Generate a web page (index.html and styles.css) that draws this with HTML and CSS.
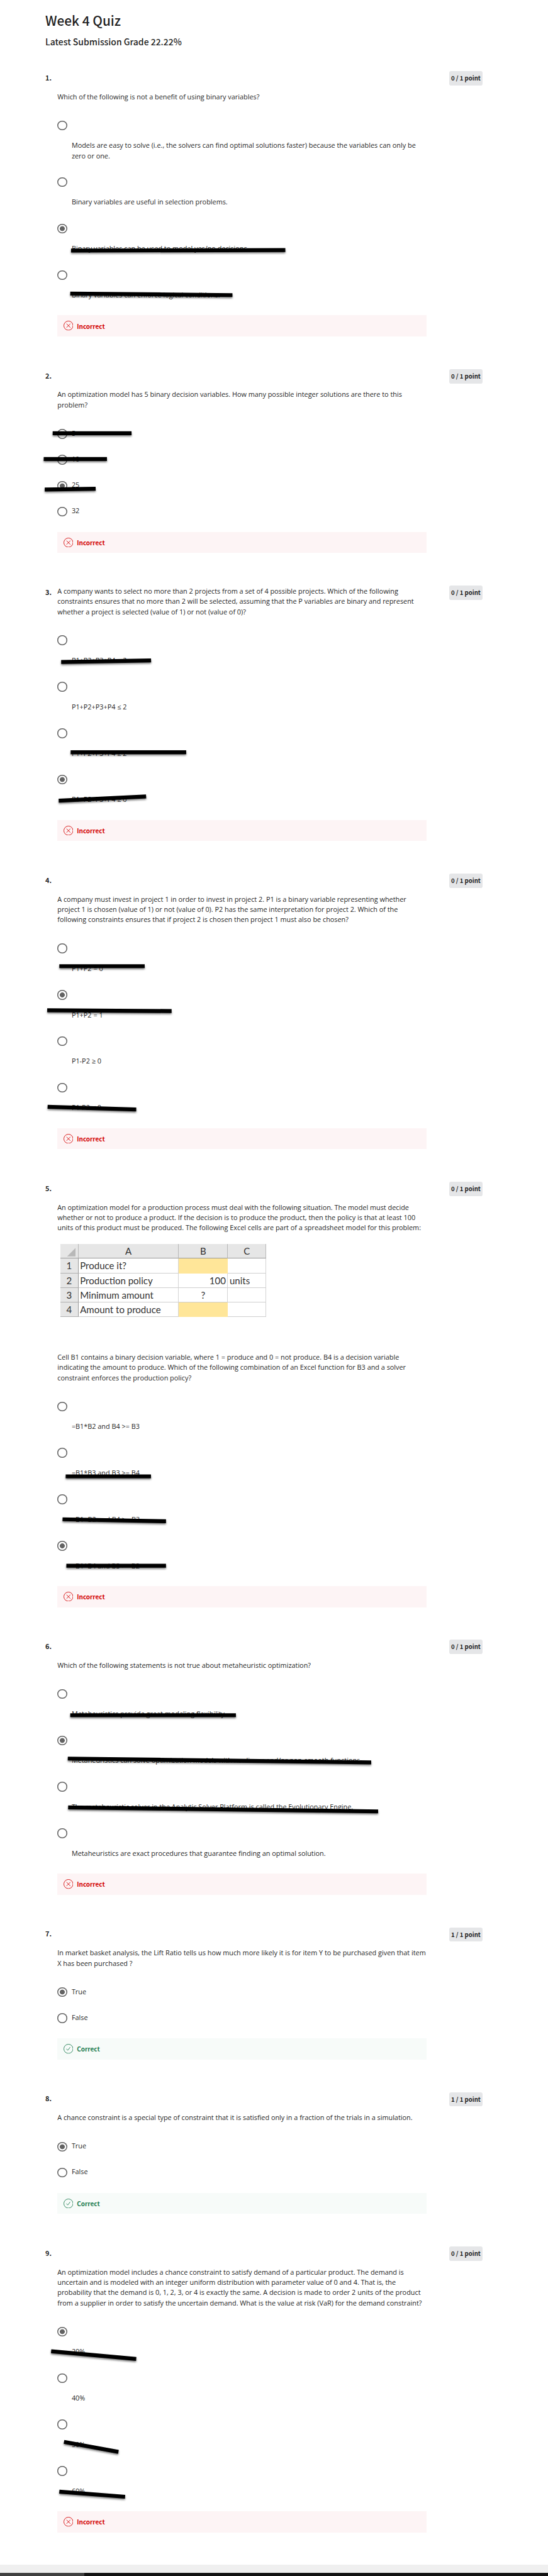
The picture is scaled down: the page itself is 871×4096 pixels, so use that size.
FILE: index.html
```html
<!DOCTYPE html>
<html lang="en">
<head>
<meta charset="utf-8">
<title>Week 4 Quiz</title>
<link rel="stylesheet" href="styles.css">
</head>
<body>
<svg class="symbols" aria-hidden="true">
  <symbol id="cross" viewBox="0 0 25 25"><circle cx="12.5" cy="12.5" r="11.7"/><path d="M7.6 7.6l9.8 9.8M17.4 7.6l-9.8 9.8"/></symbol>
  <symbol id="check" viewBox="0 0 25 25"><circle cx="12.5" cy="12.5" r="11.7"/><path d="M7.2 12.8l3.7 3.4 6-7.8"/></symbol>
</svg>
<main class="page">
  <header class="head">
    <h1 class="title">Week 4 Quiz</h1>
    <h2 class="grade">Latest Submission Grade 22.22%</h2>
  </header>

  <section class="question">
    <div class="num">1.</div>
    <div class="body">
      <p class="prompt">Which of the following is not a benefit of using binary variables?</p>
      <ul class="options">
        <li class="opt"><i class="radio"></i><span class="label">Models are easy to solve (i.e., the solvers can find optimal solutions faster) because the variables can only be<br>zero or one.</span></li>
        <li class="opt"><i class="radio"></i><span class="label">Binary variables are useful in selection problems.</span></li>
        <li class="opt"><i class="radio on"></i><span class="label">Binary variables can be used to model yes/no decisions.</span></li>
        <li class="opt"><i class="radio"></i><span class="label">Binary variables can enforce logical conditions.</span></li>
      </ul>
      <div class="result bad"><svg class="icon"><use href="#cross"/></svg>Incorrect</div>
    </div>
    <div class="points">0 / 1 point</div>
  </section>

  <section class="question">
    <div class="num">2.</div>
    <div class="body">
      <p class="prompt">An optimization model has 5 binary decision variables. How many possible integer solutions are there to this<br>problem?</p>
      <ul class="options inline">
        <li class="opt"><i class="radio"></i><span class="label">5</span></li>
        <li class="opt"><i class="radio"></i><span class="label">10</span></li>
        <li class="opt"><i class="radio on"></i><span class="label">25</span></li>
        <li class="opt"><i class="radio"></i><span class="label">32</span></li>
      </ul>
      <div class="result bad"><svg class="icon"><use href="#cross"/></svg>Incorrect</div>
    </div>
    <div class="points">0 / 1 point</div>
  </section>

  <section class="question">
    <div class="num">3.</div>
    <div class="body flush">
      <p class="prompt">A company wants to select no more than 2 projects from a set of 4 possible projects. Which of the following<br>constraints ensures that no more than 2 will be selected, assuming that the P variables are binary and represent<br>whether a project is selected (value of 1) or not (value of 0)?</p>
      <ul class="options">
        <li class="opt"><i class="radio"></i><span class="label">P1+P2+P3+P4 = 2</span></li>
        <li class="opt"><i class="radio"></i><span class="label">P1+P2+P3+P4 ≤ 2</span></li>
        <li class="opt"><i class="radio"></i><span class="label">P1+P2+P3+P4 ≥ 2</span></li>
        <li class="opt"><i class="radio on"></i><span class="label">P1+P2+P3+P4 ≥ 0</span></li>
      </ul>
      <div class="result bad"><svg class="icon"><use href="#cross"/></svg>Incorrect</div>
    </div>
    <div class="points">0 / 1 point</div>
  </section>

  <section class="question">
    <div class="num">4.</div>
    <div class="body">
      <p class="prompt">A company must invest in project 1 in order to invest in project 2. P1 is a binary variable representing whether<br>project 1 is chosen (value of 1) or not (value of 0). P2 has the same interpretation for project 2. Which of the<br>following constraints ensures that if project 2 is chosen then project 1 must also be chosen?</p>
      <ul class="options">
        <li class="opt"><i class="radio"></i><span class="label">P1+P2 = 0</span></li>
        <li class="opt"><i class="radio on"></i><span class="label">P1+P2 = 1</span></li>
        <li class="opt"><i class="radio"></i><span class="label">P1-P2 ≥ 0</span></li>
        <li class="opt"><i class="radio"></i><span class="label">P1-P2 ≤ 0</span></li>
      </ul>
      <div class="result bad"><svg class="icon"><use href="#cross"/></svg>Incorrect</div>
    </div>
    <div class="points">0 / 1 point</div>
  </section>

  <section class="question">
    <div class="num">5.</div>
    <div class="body">
      <p class="prompt">An optimization model for a production process must deal with the following situation. The model must decide<br>whether or not to produce a product. If the decision is to produce the product, then the policy is that at least 100<br>units of this product must be produced. The following Excel cells are part of a spreadsheet model for this problem:</p>
      <div class="sheet">
        <div class="cell head-cell"><i class="corner"></i></div><div class="cell head-cell">A</div><div class="cell head-cell">B</div><div class="cell head-cell">C</div>
        <div class="cell row-cell">1</div><div class="cell">Produce it?</div><div class="cell fill"></div><div class="cell"></div>
        <div class="cell row-cell">2</div><div class="cell">Production policy</div><div class="cell right">100</div><div class="cell">units</div>
        <div class="cell row-cell">3</div><div class="cell">Minimum amount</div><div class="cell center">?</div><div class="cell"></div>
        <div class="cell row-cell">4</div><div class="cell">Amount to produce</div><div class="cell fill"></div><div class="cell"></div>
      </div>
      <p class="prompt">Cell B1 contains a binary decision variable, where 1 = produce and 0 = not produce. B4 is a decision variable<br>indicating the amount to produce. Which of the following combination of an Excel function for B3 and a solver<br>constraint enforces the production policy?</p>
      <ul class="options">
        <li class="opt"><i class="radio"></i><span class="label">=B1*B2 and B4 &gt;= B3</span></li>
        <li class="opt"><i class="radio"></i><span class="label">=B1*B3 and B3 &gt;= B4</span></li>
        <li class="opt"><i class="radio"></i><span class="label">=B1+B2 and B4 &gt;= B3</span></li>
        <li class="opt"><i class="radio on"></i><span class="label">=B1*B4 and B3 &gt;= B2</span></li>
      </ul>
      <div class="result bad"><svg class="icon"><use href="#cross"/></svg>Incorrect</div>
    </div>
    <div class="points">0 / 1 point</div>
  </section>

  <section class="question">
    <div class="num">6.</div>
    <div class="body">
      <p class="prompt">Which of the following statements is not true about metaheuristic optimization?</p>
      <ul class="options">
        <li class="opt"><i class="radio"></i><span class="label">Metaheuristics provide great modeling flexibility.</span></li>
        <li class="opt"><i class="radio on"></i><span class="label">Metaheuristics can solve optimization models with nonlinear and/or non-smooth functions.</span></li>
        <li class="opt"><i class="radio"></i><span class="label">The metaheuristic solver in the Analytic Solver Platform is called the Evolutionary Engine.</span></li>
        <li class="opt"><i class="radio"></i><span class="label">Metaheuristics are exact procedures that guarantee finding an optimal solution.</span></li>
      </ul>
      <div class="result bad"><svg class="icon"><use href="#cross"/></svg>Incorrect</div>
    </div>
    <div class="points">0 / 1 point</div>
  </section>

  <section class="question">
    <div class="num">7.</div>
    <div class="body">
      <p class="prompt">In market basket analysis, the Lift Ratio tells us how much more likely it is for item Y to be purchased given that item<br>X has been purchased ?</p>
      <ul class="options inline">
        <li class="opt"><i class="radio on"></i><span class="label">True</span></li>
        <li class="opt"><i class="radio"></i><span class="label">False</span></li>
      </ul>
      <div class="result good"><svg class="icon"><use href="#check"/></svg>Correct</div>
    </div>
    <div class="points">1 / 1 point</div>
  </section>

  <section class="question">
    <div class="num">8.</div>
    <div class="body">
      <p class="prompt">A chance constraint is a special type of constraint that it is satisfied only in a fraction of the trials in a simulation.</p>
      <ul class="options inline">
        <li class="opt"><i class="radio on"></i><span class="label">True</span></li>
        <li class="opt"><i class="radio"></i><span class="label">False</span></li>
      </ul>
      <div class="result good"><svg class="icon"><use href="#check"/></svg>Correct</div>
    </div>
    <div class="points">1 / 1 point</div>
  </section>

  <section class="question">
    <div class="num">9.</div>
    <div class="body">
      <p class="prompt">An optimization model includes a chance constraint to satisfy demand of a particular product. The demand is<br>uncertain and is modeled with an integer uniform distribution with parameter value of 0 and 4. That is, the<br>probability that the demand is 0, 1, 2, 3, or 4 is exactly the same. A decision is made to order 2 units of the product<br>from a supplier in order to satisfy the uncertain demand. What is the value at risk (VaR) for the demand constraint?</p>
      <ul class="options">
        <li class="opt"><i class="radio on"></i><span class="label">20%</span></li>
        <li class="opt"><i class="radio"></i><span class="label">40%</span></li>
        <li class="opt"><i class="radio"></i><span class="label">50%</span></li>
        <li class="opt"><i class="radio"></i><span class="label">60%</span></li>
      </ul>
      <div class="result bad"><svg class="icon"><use href="#cross"/></svg>Incorrect</div>
    </div>
    <div class="points">0 / 1 point</div>
  </section>

  <footer class="foot"><div class="track"><div class="thumb"></div></div></footer>

  <!-- marker strokes crossing out the rejected answers -->
  <svg class="strikes" viewBox="0 0 1404 6599" preserveAspectRatio="none">
    <path d="M182 641.7L731 640.6"/><path d="M180 752L595.5 756"/>
    <path d="M135 1110H337"/><path d="M112 1175.9H274"/><path d="M114.6 1254L245 1252"/>
    <path d="M156.7 1696L387 1692"/><path d="M181 1926.9H477"/><path d="M150.4 2051L374.3 2040.3"/>
    <path d="M152 2475H370.7"/><path d="M121 2588L439.6 2590"/><path d="M122 2835.2L349 2842.2"/>
    <path d="M168.3 3782H386.8"/><path d="M160.3 3892L425.3 3897"/><path d="M170 4011H425.3"/>
    <path d="M180 4393.8H604.4"/><path d="M173.7 4505L951 4514.8"/><path d="M174.6 4630L968.8 4640.3"/>
    <path d="M131 6023.3L349 6043"/><path d="M164 6255.4L303.5 6281"/><path d="M152 6383L320.5 6396"/>
  </svg>
</main>
</body>
</html>
```
FILE: styles.css
```css
/* 1rem = 10 design units */
html { font-size: 6.207px; }
* { box-sizing: border-box; }
body { margin: 0; background: #fff; color: #1f1f1f; font-family: "Open Sans", sans-serif; }
.symbols { display: block; width: 0; height: 0; }
.page { position: relative; height: 4096px; overflow: hidden; display: flex; flex-direction: column; }
.head { height: 18.25rem; padding: 3.2rem 0 0 11.6rem; flex: none; }
.title, .grade, .num, .points, .result { font-family: "Noto Sans CJK SC", "Source Sans Pro", sans-serif; font-weight: 700; }
.title { margin: 0; font-size: 3.35rem; line-height: 4rem; font-weight: 500; }
.grade { margin: 2.05rem 0 0; font-size: 2.25rem; line-height: 3rem; font-weight: 500; }

.question { display: flex; align-items: flex-start; padding-left: 11.6rem; margin-bottom: 8.34rem; flex: none; }
.num { width: 3.1rem; font-size: 1.75rem; line-height: 2.6rem; padding-top: .3rem; white-space: nowrap; }
.body { width: 94.5rem; padding-top: 5.25rem; }
.flush { padding-top: .1rem; }
.points { margin-left: 5.85rem; width: 8.5rem; height: 3.65rem; border-radius: .5rem; background: #e5e6e8; font-size: 1.55rem; line-height: 3.7rem; text-align: center; white-space: nowrap; }
.prompt { margin: 0; font-size: 1.75rem; line-height: 2.635rem; white-space: nowrap; }

.options { list-style: none; margin: 4.77rem 0 0; padding: 0; display: flex; flex-direction: column; gap: 4.175rem; }
.opt { display: flex; flex-direction: column; gap: 2.58rem; }
.label { padding-left: 3.65rem; font-size: 1.75rem; line-height: 2.635rem; white-space: nowrap; }
.radio { width: 2.5rem; height: 2.5rem; box-shadow: inset 0 0 0 .25rem #636363; border-radius: 50%; display: block; flex: none; }
.on { background: radial-gradient(circle, #636363 0 .58rem, transparent .68rem); }
.inline { gap: 4rem; }
.inline .opt { flex-direction: row; align-items: center; gap: 1.15rem; height: 2.64rem; }
.inline .label { padding: 0 0 .3rem; }

.result { margin-top: 3.85rem; height: 5.45rem; padding-left: 1.5rem; display: flex; align-items: center; gap: 1rem; font-size: 1.6rem; }
.bad { background: #fdf4f5; color: #d30001; }
.good { background: #f7fbf9; color: #1d7c50; }
.icon { width: 2.5rem; height: 2.5rem; fill: none; stroke: currentColor; stroke-width: 1.4; }

.sheet { display: grid; grid-template-columns: 4.6rem 25.7rem 12.6rem 9.75rem; grid-template-rows: 3.7rem repeat(4, 3.75rem); width: 52.65rem; margin: 2.85rem 0 8.95rem .8rem; font-family: Lato, sans-serif; font-size: 2.42rem; line-height: 3.6rem; color: #333; }
.cell { border-right: 1px solid #d4d4d4; border-bottom: 1px solid #cfcfcf; padding: 0 .4rem; white-space: nowrap; overflow: hidden; }
.head-cell { background: #e6e6e6; border-right-color: #b8b8b8; border-bottom: 1px solid #999; text-align: center; }
.row-cell { background: #e6e6e6; border-right-color: #999; border-bottom-color: #b0b0b0; text-align: center; }
.fill { background: #ffe699; border-color: #ffe699; }
.right { text-align: right; }
.center { text-align: center; }
.corner { display: block; width: 2.2rem; height: 2.2rem; margin: .9rem 0 0 1.3rem; background: #b8b8b8; clip-path: polygon(100% 0, 100% 100%, 0 100%); }

.foot { margin-top: auto; height: 3.1rem; padding-top: 2.1rem; background: #efefef; flex: none; }
.track { height: 1rem; background: #111; }
.thumb { width: 21.6rem; height: 1rem; background: #3f3f3f; }
.strikes { position: absolute; left: 0; top: 0; width: 871px; height: 4096px; fill: none; stroke: #000; stroke-width: 10; filter: drop-shadow(0 2px 1.5px rgba(0,0,0,.5)); }
```
